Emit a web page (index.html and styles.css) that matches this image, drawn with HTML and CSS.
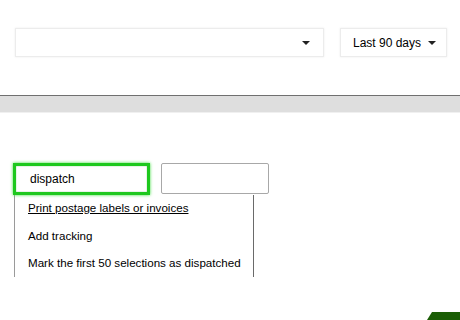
FILE: index.html
```html
<!DOCTYPE html>
<html lang="en">
<head>
  <meta charset="UTF-8" />
  <title>Orders - dispatch search</title>
  <link rel="stylesheet" href="styles.css">
</head>
<body>

  <div class="filters">
    <div class="select select-wide">
      <span class="select-value"></span>
      <span class="caret"></span>
    </div>
    <div class="select select-range">
      <span class="select-value">Last 90 days</span>
      <span class="caret"></span>
    </div>
  </div>

  <div class="divider"></div>

  <div class="search-area">
    <div class="search-row">
      <div class="search-input">dispatch</div>
      <div class="blank-input"></div>
    </div>
    <ul class="suggestions">
      <li class="link">Print postage labels or invoices</li>
      <li>Add tracking</li>
      <li>Mark the first 50 selections as dispatched</li>
    </ul>
  </div>

  <div class="footer">
    <div class="corner-btn"></div>
  </div>

</body>
</html>
```

FILE: styles.css
```css
html, body { height: 100%; }
body {
  font-family: 'Liberation Sans', Arial, sans-serif;
  margin: 0;
  background: #fff;
  color: #000;
  overflow: hidden;
}
.filters {
  display: flex;
  gap: 16px;
  padding: 28px 0 0 15px;
}
.select {
  height: 29px;
  box-sizing: border-box;
  border: 1px solid #ececec;
  box-shadow: 0 0 2px rgba(0,0,0,0.08);
  display: flex;
  align-items: center;
  background: #fff;
}
.select-wide { width: 309px; justify-content: flex-end; padding-right: 13px; }
.select-range { width: 107px; padding-left: 12px; }
.select-range .caret { margin-left: 7px; }
.select-value { font-size: 12px; color: #000; }
.caret {
  width: 0; height: 0;
  border-left: 4px solid transparent;
  border-right: 4px solid transparent;
  border-top: 4px solid #222;
  margin-top: 1px;
}
.divider {
  margin-top: 38px;
  height: 16px;
  background: #dedede;
  border-top: 1px solid #6f6f6f;
  border-bottom: 1px solid #f0f0f0;
}
.search-area { padding: 50px 0 0 13px; }
.search-row { display: flex; gap: 11px; align-items: flex-start; }
.search-input {
  width: 117px;
  height: 26px;
  border: 3px solid #1ec81e;
  box-shadow: 0 0 3px #3ddc3d, inset 0 0 1px #0a8a0a;
  font-size: 12px;
  line-height: 26px;
  padding-left: 14px;
}
.blank-input {
  width: 106px;
  height: 29px;
  border: 1px solid #a8a8a8;
  border-radius: 2px;
}
.suggestions {
  list-style: none;
  margin: 0 0 0 1px;
  padding: 5px 0 0 13px;
  width: 225px;
  height: 77px;
  border-left: 1px solid #9a9a9a;
  border-right: 1px solid #6a6a6a;
}
.suggestions li {
  font-size: 11.6px;
  height: 27.5px;
  line-height: 16px;
}
.suggestions .link { text-decoration: underline; }
.footer {
  display: flex;
  justify-content: flex-end;
  margin-top: 35px;
}
.corner-btn {
  width: 33px;
  height: 8px;
  background: #1b5e06;
  clip-path: polygon(5px 0, 100% 0, 100% 100%, 0 100%);
}
```
